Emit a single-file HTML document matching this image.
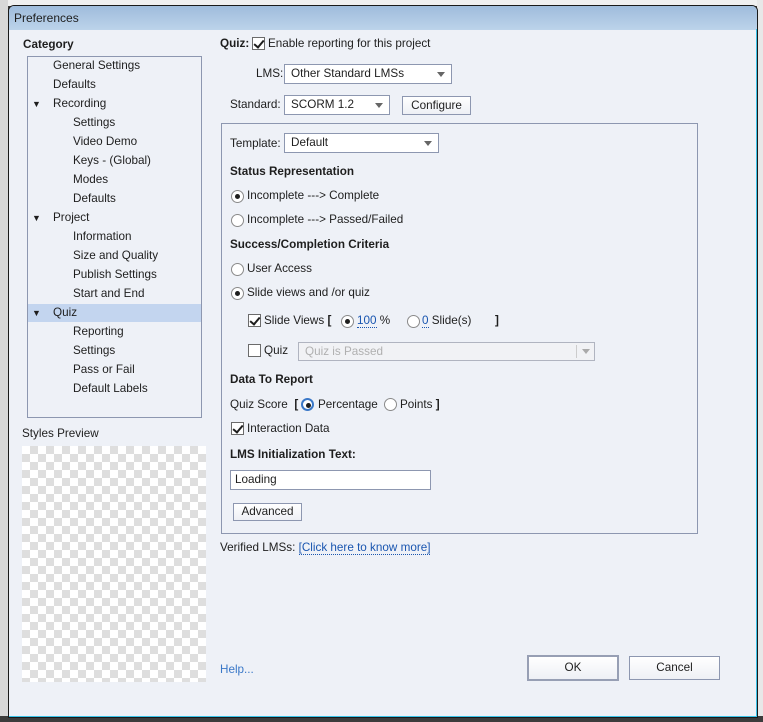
<!DOCTYPE html>
<html><head><meta charset="utf-8"><style>
*{box-sizing:border-box;margin:0;padding:0}
body{width:763px;height:722px;position:relative;overflow:hidden;background:#3c3c3c;font-family:"Liberation Sans",sans-serif;font-size:11.7px;color:#1e1e1e}
.a{position:absolute;white-space:nowrap;line-height:14px}
.b{font-weight:bold}
.win{position:absolute;left:8px;top:5px;width:750px;height:713px;background:#eef1f7;border:1px solid #1a1a1a;border-radius:6px 6px 0 0;overflow:hidden}
.title{position:absolute;left:0;top:0;width:100%;height:24px;background:linear-gradient(#9fbcdc,#bcd3ea)}
.cb{position:absolute;width:13px;height:13px;border:1px solid #6b6b6b;background:#fff}
.cb.on::after{content:"";position:absolute;left:3px;top:0px;width:4px;height:8px;border:solid #1e1e1e;border-width:0 2px 2px 0;transform:rotate(40deg)}
.rd{position:absolute;width:13px;height:13px;border:1px solid #8a8a8a;border-radius:50%;background:#fff}
.rd.on::after{content:"";position:absolute;left:3px;top:3px;width:5px;height:5px;border-radius:50%;background:#1e1e1e}
.sel{position:absolute;height:20px;border:1px solid #8d97b0;background:#fff}
.sel span{position:absolute;left:6px;top:2px}
.sel i{position:absolute;right:6px;top:7px;border-left:4px solid transparent;border-right:4px solid transparent;border-top:5px solid #666}
.btn{position:absolute;border:1px solid #8d97b0;background:linear-gradient(#fff,#eef0f5);text-align:center;line-height:18px}
</style></head><body>
<div style="position:absolute;left:0;top:0;width:763px;height:6px;background:#f0f0f0"></div>
<div style="position:absolute;left:0;top:0;width:8px;height:722px;background:#d8d8d8"></div>
<div style="position:absolute;left:757px;top:0;width:6px;height:722px;background:#e8e8e8"></div>
<div style="position:absolute;left:0;top:716px;width:763px;height:6px;background:#3c3c3c"></div>
<div class="win">
<div class="title"></div>
<div class="a" style="left:5px;top:5px;font-size:12px">Preferences</div>
</div>
<div style="position:absolute;left:756px;top:29px;width:1px;height:688px;background:#39c3e8"></div>
<div style="position:absolute;left:9px;top:716px;width:748px;height:1px;background:#39c3e8"></div>

<div class="a b" style="left:23px;top:38px">Category</div>
<div style="position:absolute;left:27px;top:56px;width:175px;height:362px;border:1px solid #8d97b0;background:#eef1f7"></div>
<div style="position:absolute;left:28px;top:304px;width:173px;height:18px;background:#c3d5ef"></div>
<div class="a" style="left:53px;top:59px">General Settings</div>
<div class="a" style="left:53px;top:78px">Defaults</div>
<div class="a" style="left:32px;top:97px;font-size:9px">▼</div><div class="a" style="left:53px;top:97px">Recording</div>
<div class="a" style="left:73px;top:116px">Settings</div>
<div class="a" style="left:73px;top:135px">Video Demo</div>
<div class="a" style="left:73px;top:154px">Keys - (Global)</div>
<div class="a" style="left:73px;top:173px">Modes</div>
<div class="a" style="left:73px;top:192px">Defaults</div>
<div class="a" style="left:32px;top:211px;font-size:9px">▼</div><div class="a" style="left:53px;top:211px">Project</div>
<div class="a" style="left:73px;top:230px">Information</div>
<div class="a" style="left:73px;top:249px">Size and Quality</div>
<div class="a" style="left:73px;top:268px">Publish Settings</div>
<div class="a" style="left:73px;top:287px">Start and End</div>
<div class="a" style="left:32px;top:306px;font-size:9px">▼</div><div class="a" style="left:53px;top:306px">Quiz</div>
<div class="a" style="left:73px;top:325px">Reporting</div>
<div class="a" style="left:73px;top:344px">Settings</div>
<div class="a" style="left:73px;top:363px">Pass or Fail</div>
<div class="a" style="left:73px;top:382px">Default Labels</div>

<div class="a" style="left:22px;top:427px">Styles Preview</div>
<div style="position:absolute;left:22px;top:446px;width:184px;height:236px;background-color:#fff;background-image:linear-gradient(45deg,#dedede 25%,transparent 25%,transparent 75%,#dedede 75%),linear-gradient(45deg,#dedede 25%,transparent 25%,transparent 75%,#dedede 75%);background-size:16px 16px;background-position:0 0,8px 8px"></div>

<div class="a b" style="left:220px;top:37px">Quiz:</div>
<div class="cb on" style="left:252px;top:37px"></div>
<div class="a" style="left:268px;top:37px">Enable reporting for this project</div>
<div class="a" style="left:256px;top:67px">LMS:</div>
<div class="sel" style="left:284px;top:64px;width:168px;height:20px"><span>Other Standard LMSs</span><i></i></div>
<div class="a" style="left:230px;top:98px">Standard:</div>
<div class="sel" style="left:284px;top:95px;width:106px;height:20px"><span>SCORM 1.2</span><i></i></div>
<div class="btn" style="left:402px;top:96px;width:69px;height:19px">Configure</div>

<div style="position:absolute;left:221px;top:123px;width:477px;height:411px;border:1px solid #8d97b0"></div>
<div class="a" style="left:230px;top:137px">Template:</div>
<div class="sel" style="left:284px;top:133px;width:155px;height:20px"><span>Default</span><i></i></div>
<div class="a b" style="left:230px;top:165px">Status Representation</div>
<div class="rd on" style="left:231px;top:190px"></div><div class="a" style="left:247px;top:189px">Incomplete ---&gt; Complete</div>
<div class="rd" style="left:231px;top:214px"></div><div class="a" style="left:247px;top:213px">Incomplete ---&gt; Passed/Failed</div>
<div class="a b" style="left:230px;top:238px">Success/Completion Criteria</div>
<div class="rd" style="left:231px;top:263px"></div><div class="a" style="left:247px;top:262px">User Access</div>
<div class="rd on" style="left:231px;top:287px"></div><div class="a" style="left:247px;top:286px">Slide views and /or quiz</div>
<div class="cb on" style="left:248px;top:314px"></div><div class="a" style="left:264px;top:314px">Slide Views <b>[</b></div>
<div class="rd on" style="left:341px;top:315px"></div><div class="a" style="left:357px;top:314px"><span style="color:#1a56b0;border-bottom:1px dotted #1a56b0">100</span> %</div>
<div class="rd" style="left:407px;top:315px"></div><div class="a" style="left:422px;top:314px"><span style="color:#1a56b0;border-bottom:1px dotted #1a56b0">0</span> Slide(s)</div>
<div class="a b" style="left:495px;top:314px">]</div>
<div class="cb" style="left:248px;top:344px"></div><div class="a" style="left:264px;top:344px">Quiz</div>
<div style="position:absolute;left:298px;top:342px;width:297px;height:19px;border:1px solid #b0b4c0;background:#f1f2f5"></div>
<div class="a" style="left:305px;top:345px;color:#b0b0b0">Quiz is Passed</div>
<div style="position:absolute;left:576px;top:345px;width:1px;height:13px;background:#ccc"></div>
<div style="position:absolute;left:582px;top:349px;border-left:4px solid transparent;border-right:4px solid transparent;border-top:5px solid #aaa"></div>
<div class="a b" style="left:230px;top:373px">Data To Report</div>
<div class="a" style="left:230px;top:398px">Quiz Score &nbsp;<b>[</b></div>
<div class="rd on" style="left:301px;top:398px;border:2px solid #3a78c8"></div><div class="a" style="left:318px;top:398px">Percentage</div>
<div class="rd" style="left:384px;top:398px"></div><div class="a" style="left:400px;top:398px">Points <b>]</b></div>
<div class="cb on" style="left:231px;top:422px"></div><div class="a" style="left:247px;top:422px">Interaction Data</div>
<div class="a b" style="left:230px;top:448px">LMS Initialization Text:</div>
<div style="position:absolute;left:230px;top:470px;width:201px;height:20px;border:1px solid #8d97b0;background:#fff"></div>
<div class="a" style="left:235px;top:473px">Loading</div>
<div class="btn" style="left:233px;top:503px;width:69px;height:18px;line-height:16px">Advanced</div>
<div class="a" style="left:220px;top:541px">Verified LMSs: <span style="color:#1a56b0;border-bottom:1px dotted #1a56b0">[Click here to know more]</span></div>
<div class="a" style="left:220px;top:663px;color:#3a78c8">Help...</div>
<div class="btn" style="left:527px;top:655px;width:92px;height:26px;border:2px solid #979fb4;line-height:22px">OK</div>
<div class="btn" style="left:629px;top:656px;width:91px;height:24px;line-height:22px">Cancel</div>
</body></html>
